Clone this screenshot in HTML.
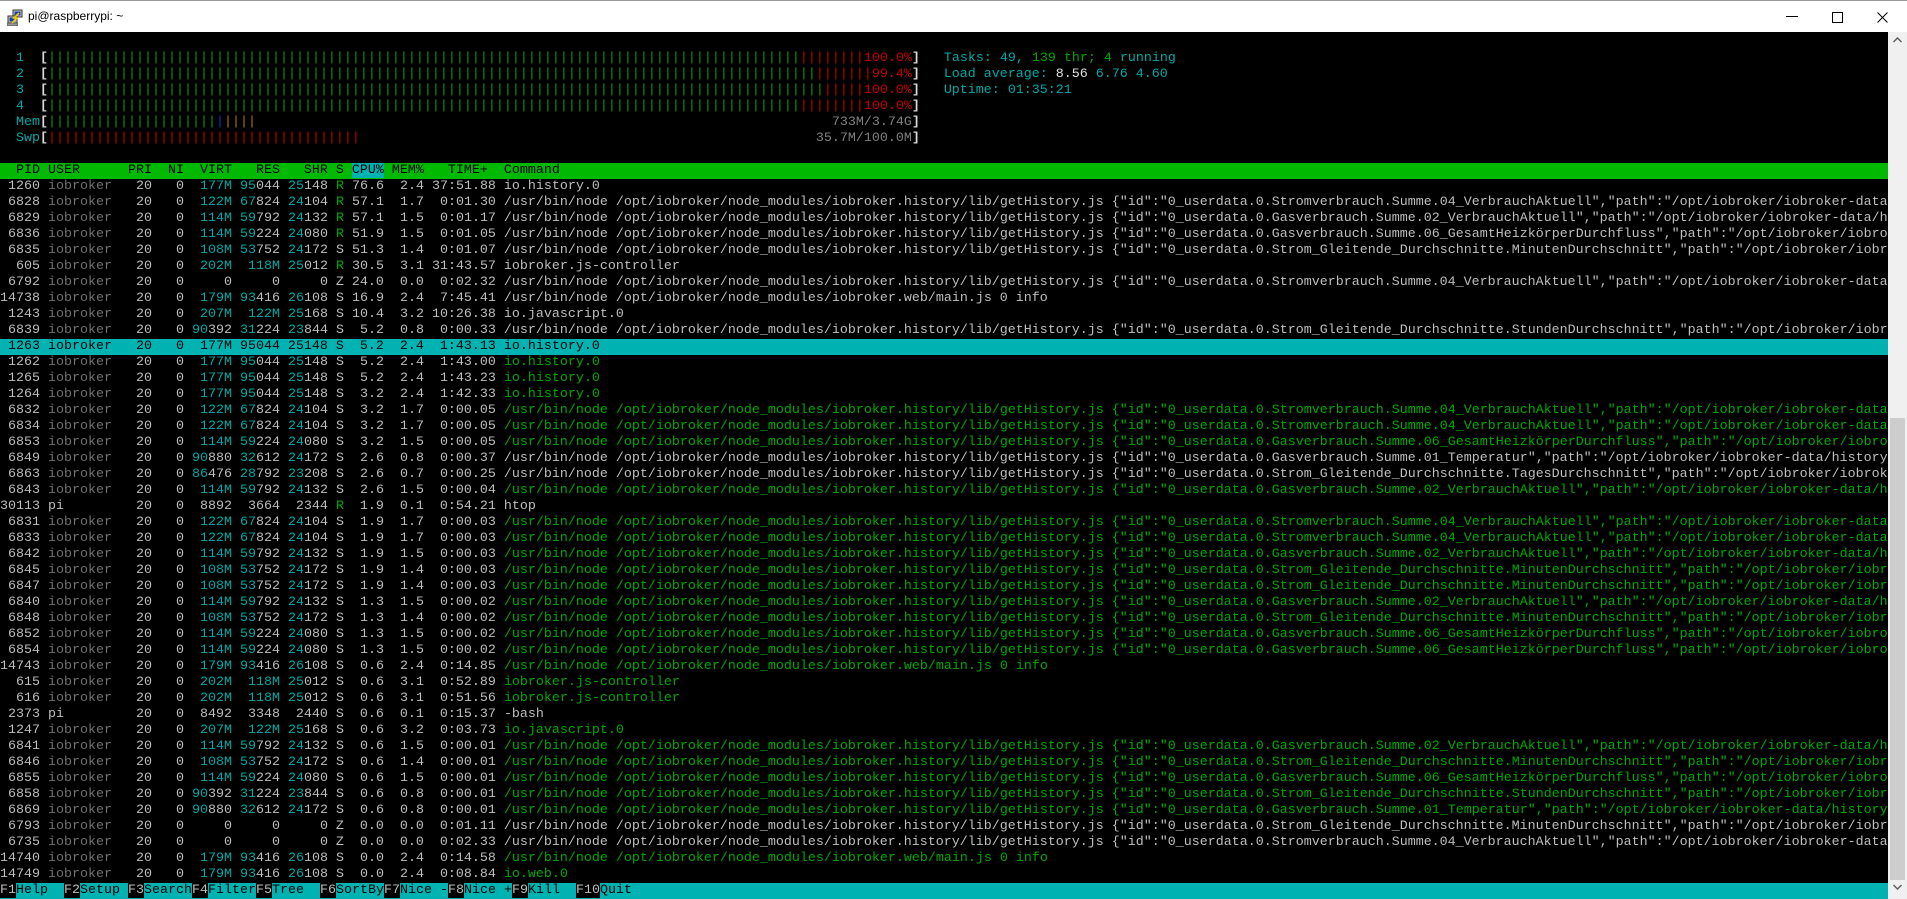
<!DOCTYPE html>
<html><head><meta charset="utf-8"><style>
*{margin:0;padding:0}
html,body{width:1907px;height:899px;overflow:hidden;background:#fff}
#tb{position:absolute;left:0;top:0;width:1907px;height:32px;background:#fff;border-top:1px solid #9a9a9a;box-sizing:border-box}
#tb .t{position:absolute;left:28px;top:8px;font:12px "Liberation Sans",sans-serif;color:#000}
#term{position:absolute;left:0;top:32px;width:1888px;height:867px;background:#000;overflow:hidden;padding-top:3px;box-sizing:border-box}
#term div{height:16px;line-height:16px;white-space:pre;font-family:"Liberation Mono",monospace;font-size:13.333px;color:#bdbdbd;overflow:hidden;width:1888px}
d{color:#6f6f6f}c{color:#00a8a8}g{color:#00a800}r{color:#c40000}k{color:#0a9a00}b{color:#d8d8d8;font-weight:bold}
m{color:#1a2fd0}o{color:#b07a00}y{color:#808080}e{color:#e0e0e0}
.hd{background:#00b900;color:#000!important}
.hd h{background:#00b3b3;font-style:normal}
.sel{background:#00b3b3;color:#000!important}
.fk{background:#00b3b3;color:#000!important}
.fk f{background:#000;color:#bdbdbd}
#sb{position:absolute;left:1888px;top:32px;width:19px;height:867px;background:#f0f0f0}
#th{position:absolute;left:2px;top:386px;width:15px;height:462px;background:#cdcdcd}
</style></head><body>
<div id="tb">
<svg style="position:absolute;left:7px;top:8px" width="17" height="17" viewBox="0 0 17 17"><rect x="6" y="1" width="9" height="7" fill="#c8c8c8" stroke="#333"/><rect x="7.5" y="2.5" width="6" height="4" fill="#1c3fae"/><rect x="1" y="7" width="9" height="7" fill="#c8c8c8" stroke="#333"/><rect x="2.5" y="8.5" width="6" height="4" fill="#1c3fae"/><rect x="0.5" y="14" width="10" height="2.5" fill="#999" stroke="#333" stroke-width="0.6"/><path d="M12 4 L7 9 L10 9 L5 14" stroke="#f2d000" stroke-width="1.6" fill="none"/></svg>
<span class="t">pi@raspberrypi: ~</span>
<svg style="position:absolute;left:1786px;top:15px" width="12" height="2"><rect width="12" height="1" fill="#000"/></svg>
<svg style="position:absolute;left:1832px;top:11px" width="11" height="11"><rect x="0.5" y="0.5" width="10" height="10" fill="none" stroke="#000"/></svg>
<svg style="position:absolute;left:1877px;top:11px" width="11" height="11"><path d="M0.5 0.5L10.5 10.5M10.5 0.5L0.5 10.5" stroke="#000"/></svg>
</div>
<div id="term">
<div> </div>
<div>  <c>1</c>  <b>[</b><k>||||||||||||||||||||||||||||||||||||||||||||||||||||||||||||||||||||||||||||||||||||||||||||||</k><r>||||||||100.0%</r><b>]</b>   <c>Tasks: </c><c>49</c><c>, </c><g>139</g><g> thr; </g><g>4</g><c> running</c></div>
<div>  <c>2</c>  <b>[</b><k>||||||||||||||||||||||||||||||||||||||||||||||||||||||||||||||||||||||||||||||||||||||||||||||||</k><r>|||||||99.4%</r><b>]</b>   <c>Load average: </c><e>8.56 </e><c>6.76 </c><c>4.60</c></div>
<div>  <c>3</c>  <b>[</b><k>|||||||||||||||||||||||||||||||||||||||||||||||||||||||||||||||||||||||||||||||||||||||||||||||||</k><r>|||||100.0%</r><b>]</b>   <c>Uptime: </c><c>01:35:21</c></div>
<div>  <c>4</c>  <b>[</b><k>||||||||||||||||||||||||||||||||||||||||||||||||||||||||||||||||||||||||||||||||||||||||||||||</k><r>||||||||100.0%</r><b>]</b></div>
<div>  <c>Mem</c><b>[</b><k>|||||||||||||||||||||</k><m>|</m><o>||||</o>                                                                        <y>733M/3.74G</y><b>]</b></div>
<div>  <c>Swp</c><b>[</b><r>|||||||||||||||||||||||||||||||||||||||</r>                                                         <y>35.7M/100.0M</y><b>]</b></div>
<div> </div>
<div class="hd">  PID USER      PRI  NI  VIRT   RES   SHR S <h>CPU%</h> MEM%   TIME+  Command                                                                                                                                                                                    </div>
<div> 1260 <d>iobroker </d>  20   0  <c>177M</c> <c>95</c>044 <c>25</c>148 <g>R</g> 76.6  2.4 37:51.88 io.history.0</div>
<div> 6828 <d>iobroker </d>  20   0  <c>122M</c> <c>67</c>824 <c>24</c>104 <g>R</g> 57.1  1.7  0:01.30 /usr/bin/node /opt/iobroker/node_modules/iobroker.history/lib/getHistory.js {"id":"0_userdata.0.Stromverbrauch.Summe.04_VerbrauchAktuell","path":"/opt/iobroker/iobroker-data/history/"}</div>
<div> 6829 <d>iobroker </d>  20   0  <c>114M</c> <c>59</c>792 <c>24</c>132 <g>R</g> 57.1  1.5  0:01.17 /usr/bin/node /opt/iobroker/node_modules/iobroker.history/lib/getHistory.js {"id":"0_userdata.0.Gasverbrauch.Summe.02_VerbrauchAktuell","path":"/opt/iobroker/iobroker-data/history/"}</div>
<div> 6836 <d>iobroker </d>  20   0  <c>114M</c> <c>59</c>224 <c>24</c>080 <g>R</g> 51.9  1.5  0:01.05 /usr/bin/node /opt/iobroker/node_modules/iobroker.history/lib/getHistory.js {"id":"0_userdata.0.Gasverbrauch.Summe.06_GesamtHeizkörperDurchfluss","path":"/opt/iobroker/iobroker-data/"}</div>
<div> 6835 <d>iobroker </d>  20   0  <c>108M</c> <c>53</c>752 <c>24</c>172 S 51.3  1.4  0:01.07 /usr/bin/node /opt/iobroker/node_modules/iobroker.history/lib/getHistory.js {"id":"0_userdata.0.Strom_Gleitende_Durchschnitte.MinutenDurchschnitt","path":"/opt/iobroker/iobroker-data/"}</div>
<div>  605 <d>iobroker </d>  20   0  <c>202M</c>  <c>118M</c> <c>25</c>012 <g>R</g> 30.5  3.1 31:43.57 iobroker.js-controller</div>
<div> 6792 <d>iobroker </d>  20   0     0     0     0 Z 24.0  0.0  0:02.32 /usr/bin/node /opt/iobroker/node_modules/iobroker.history/lib/getHistory.js {"id":"0_userdata.0.Stromverbrauch.Summe.04_VerbrauchAktuell","path":"/opt/iobroker/iobroker-data/history/"}</div>
<div>14738 <d>iobroker </d>  20   0  <c>179M</c> <c>93</c>416 <c>26</c>108 S 16.9  2.4  7:45.41 /usr/bin/node /opt/iobroker/node_modules/iobroker.web/main.js 0 info</div>
<div> 1243 <d>iobroker </d>  20   0  <c>207M</c>  <c>122M</c> <c>25</c>168 S 10.4  3.2 10:26.38 io.javascript.0</div>
<div> 6839 <d>iobroker </d>  20   0 <c>90</c>392 <c>31</c>224 <c>23</c>844 S  5.2  0.8  0:00.33 /usr/bin/node /opt/iobroker/node_modules/iobroker.history/lib/getHistory.js {"id":"0_userdata.0.Strom_Gleitende_Durchschnitte.StundenDurchschnitt","path":"/opt/iobroker/iobroker-data/"}</div>
<div class="sel"> 1263 iobroker   20   0  177M 95044 25148 S  5.2  2.4  1:43.13 io.history.0                                                                                                                                                                                         </div>
<div> 1262 <d>iobroker </d>  20   0  <c>177M</c> <c>95</c>044 <c>25</c>148 S  5.2  2.4  1:43.00 <g>io.history.0</g></div>
<div> 1265 <d>iobroker </d>  20   0  <c>177M</c> <c>95</c>044 <c>25</c>148 S  5.2  2.4  1:43.23 <g>io.history.0</g></div>
<div> 1264 <d>iobroker </d>  20   0  <c>177M</c> <c>95</c>044 <c>25</c>148 S  3.2  2.4  1:42.33 <g>io.history.0</g></div>
<div> 6832 <d>iobroker </d>  20   0  <c>122M</c> <c>67</c>824 <c>24</c>104 S  3.2  1.7  0:00.05 <g>/usr/bin/node /opt/iobroker/node_modules/iobroker.history/lib/getHistory.js {"id":"0_userdata.0.Stromverbrauch.Summe.04_VerbrauchAktuell","path":"/opt/iobroker/iobroker-data/history/"}</g></div>
<div> 6834 <d>iobroker </d>  20   0  <c>122M</c> <c>67</c>824 <c>24</c>104 S  3.2  1.7  0:00.05 <g>/usr/bin/node /opt/iobroker/node_modules/iobroker.history/lib/getHistory.js {"id":"0_userdata.0.Stromverbrauch.Summe.04_VerbrauchAktuell","path":"/opt/iobroker/iobroker-data/history/"}</g></div>
<div> 6853 <d>iobroker </d>  20   0  <c>114M</c> <c>59</c>224 <c>24</c>080 S  3.2  1.5  0:00.05 <g>/usr/bin/node /opt/iobroker/node_modules/iobroker.history/lib/getHistory.js {"id":"0_userdata.0.Gasverbrauch.Summe.06_GesamtHeizkörperDurchfluss","path":"/opt/iobroker/iobroker-data/"}</g></div>
<div> 6849 <d>iobroker </d>  20   0 <c>90</c>880 <c>32</c>612 <c>24</c>172 S  2.6  0.8  0:00.37 /usr/bin/node /opt/iobroker/node_modules/iobroker.history/lib/getHistory.js {"id":"0_userdata.0.Gasverbrauch.Summe.01_Temperatur","path":"/opt/iobroker/iobroker-data/history/abc"}</div>
<div> 6863 <d>iobroker </d>  20   0 <c>86</c>476 <c>28</c>792 <c>23</c>208 S  2.6  0.7  0:00.25 /usr/bin/node /opt/iobroker/node_modules/iobroker.history/lib/getHistory.js {"id":"0_userdata.0.Strom_Gleitende_Durchschnitte.TagesDurchschnitt","path":"/opt/iobroker/iobroker-data/"}</div>
<div> 6843 <d>iobroker </d>  20   0  <c>114M</c> <c>59</c>792 <c>24</c>132 S  2.6  1.5  0:00.04 <g>/usr/bin/node /opt/iobroker/node_modules/iobroker.history/lib/getHistory.js {"id":"0_userdata.0.Gasverbrauch.Summe.02_VerbrauchAktuell","path":"/opt/iobroker/iobroker-data/history/"}</g></div>
<div>30113 pi         20   0  8892  3664  2344 <g>R</g>  1.9  0.1  0:54.21 htop</div>
<div> 6831 <d>iobroker </d>  20   0  <c>122M</c> <c>67</c>824 <c>24</c>104 S  1.9  1.7  0:00.03 <g>/usr/bin/node /opt/iobroker/node_modules/iobroker.history/lib/getHistory.js {"id":"0_userdata.0.Stromverbrauch.Summe.04_VerbrauchAktuell","path":"/opt/iobroker/iobroker-data/history/"}</g></div>
<div> 6833 <d>iobroker </d>  20   0  <c>122M</c> <c>67</c>824 <c>24</c>104 S  1.9  1.7  0:00.03 <g>/usr/bin/node /opt/iobroker/node_modules/iobroker.history/lib/getHistory.js {"id":"0_userdata.0.Stromverbrauch.Summe.04_VerbrauchAktuell","path":"/opt/iobroker/iobroker-data/history/"}</g></div>
<div> 6842 <d>iobroker </d>  20   0  <c>114M</c> <c>59</c>792 <c>24</c>132 S  1.9  1.5  0:00.03 <g>/usr/bin/node /opt/iobroker/node_modules/iobroker.history/lib/getHistory.js {"id":"0_userdata.0.Gasverbrauch.Summe.02_VerbrauchAktuell","path":"/opt/iobroker/iobroker-data/history/"}</g></div>
<div> 6845 <d>iobroker </d>  20   0  <c>108M</c> <c>53</c>752 <c>24</c>172 S  1.9  1.4  0:00.03 <g>/usr/bin/node /opt/iobroker/node_modules/iobroker.history/lib/getHistory.js {"id":"0_userdata.0.Strom_Gleitende_Durchschnitte.MinutenDurchschnitt","path":"/opt/iobroker/iobroker-data/"}</g></div>
<div> 6847 <d>iobroker </d>  20   0  <c>108M</c> <c>53</c>752 <c>24</c>172 S  1.9  1.4  0:00.03 <g>/usr/bin/node /opt/iobroker/node_modules/iobroker.history/lib/getHistory.js {"id":"0_userdata.0.Strom_Gleitende_Durchschnitte.MinutenDurchschnitt","path":"/opt/iobroker/iobroker-data/"}</g></div>
<div> 6840 <d>iobroker </d>  20   0  <c>114M</c> <c>59</c>792 <c>24</c>132 S  1.3  1.5  0:00.02 <g>/usr/bin/node /opt/iobroker/node_modules/iobroker.history/lib/getHistory.js {"id":"0_userdata.0.Gasverbrauch.Summe.02_VerbrauchAktuell","path":"/opt/iobroker/iobroker-data/history/"}</g></div>
<div> 6848 <d>iobroker </d>  20   0  <c>108M</c> <c>53</c>752 <c>24</c>172 S  1.3  1.4  0:00.02 <g>/usr/bin/node /opt/iobroker/node_modules/iobroker.history/lib/getHistory.js {"id":"0_userdata.0.Strom_Gleitende_Durchschnitte.MinutenDurchschnitt","path":"/opt/iobroker/iobroker-data/"}</g></div>
<div> 6852 <d>iobroker </d>  20   0  <c>114M</c> <c>59</c>224 <c>24</c>080 S  1.3  1.5  0:00.02 <g>/usr/bin/node /opt/iobroker/node_modules/iobroker.history/lib/getHistory.js {"id":"0_userdata.0.Gasverbrauch.Summe.06_GesamtHeizkörperDurchfluss","path":"/opt/iobroker/iobroker-data/"}</g></div>
<div> 6854 <d>iobroker </d>  20   0  <c>114M</c> <c>59</c>224 <c>24</c>080 S  1.3  1.5  0:00.02 <g>/usr/bin/node /opt/iobroker/node_modules/iobroker.history/lib/getHistory.js {"id":"0_userdata.0.Gasverbrauch.Summe.06_GesamtHeizkörperDurchfluss","path":"/opt/iobroker/iobroker-data/"}</g></div>
<div>14743 <d>iobroker </d>  20   0  <c>179M</c> <c>93</c>416 <c>26</c>108 S  0.6  2.4  0:14.85 <g>/usr/bin/node /opt/iobroker/node_modules/iobroker.web/main.js 0 info</g></div>
<div>  615 <d>iobroker </d>  20   0  <c>202M</c>  <c>118M</c> <c>25</c>012 S  0.6  3.1  0:52.89 <g>iobroker.js-controller</g></div>
<div>  616 <d>iobroker </d>  20   0  <c>202M</c>  <c>118M</c> <c>25</c>012 S  0.6  3.1  0:51.56 <g>iobroker.js-controller</g></div>
<div> 2373 pi         20   0  8492  3348  2440 S  0.6  0.1  0:15.37 -bash</div>
<div> 1247 <d>iobroker </d>  20   0  <c>207M</c>  <c>122M</c> <c>25</c>168 S  0.6  3.2  0:03.73 <g>io.javascript.0</g></div>
<div> 6841 <d>iobroker </d>  20   0  <c>114M</c> <c>59</c>792 <c>24</c>132 S  0.6  1.5  0:00.01 <g>/usr/bin/node /opt/iobroker/node_modules/iobroker.history/lib/getHistory.js {"id":"0_userdata.0.Gasverbrauch.Summe.02_VerbrauchAktuell","path":"/opt/iobroker/iobroker-data/history/"}</g></div>
<div> 6846 <d>iobroker </d>  20   0  <c>108M</c> <c>53</c>752 <c>24</c>172 S  0.6  1.4  0:00.01 <g>/usr/bin/node /opt/iobroker/node_modules/iobroker.history/lib/getHistory.js {"id":"0_userdata.0.Strom_Gleitende_Durchschnitte.MinutenDurchschnitt","path":"/opt/iobroker/iobroker-data/"}</g></div>
<div> 6855 <d>iobroker </d>  20   0  <c>114M</c> <c>59</c>224 <c>24</c>080 S  0.6  1.5  0:00.01 <g>/usr/bin/node /opt/iobroker/node_modules/iobroker.history/lib/getHistory.js {"id":"0_userdata.0.Gasverbrauch.Summe.06_GesamtHeizkörperDurchfluss","path":"/opt/iobroker/iobroker-data/"}</g></div>
<div> 6858 <d>iobroker </d>  20   0 <c>90</c>392 <c>31</c>224 <c>23</c>844 S  0.6  0.8  0:00.01 <g>/usr/bin/node /opt/iobroker/node_modules/iobroker.history/lib/getHistory.js {"id":"0_userdata.0.Strom_Gleitende_Durchschnitte.StundenDurchschnitt","path":"/opt/iobroker/iobroker-data/"}</g></div>
<div> 6869 <d>iobroker </d>  20   0 <c>90</c>880 <c>32</c>612 <c>24</c>172 S  0.6  0.8  0:00.01 <g>/usr/bin/node /opt/iobroker/node_modules/iobroker.history/lib/getHistory.js {"id":"0_userdata.0.Gasverbrauch.Summe.01_Temperatur","path":"/opt/iobroker/iobroker-data/history/abc"}</g></div>
<div> 6793 <d>iobroker </d>  20   0     0     0     0 Z  0.0  0.0  0:01.11 /usr/bin/node /opt/iobroker/node_modules/iobroker.history/lib/getHistory.js {"id":"0_userdata.0.Strom_Gleitende_Durchschnitte.MinutenDurchschnitt","path":"/opt/iobroker/iobroker-data/"}</div>
<div> 6735 <d>iobroker </d>  20   0     0     0     0 Z  0.0  0.0  0:02.33 /usr/bin/node /opt/iobroker/node_modules/iobroker.history/lib/getHistory.js {"id":"0_userdata.0.Stromverbrauch.Summe.04_VerbrauchAktuell","path":"/opt/iobroker/iobroker-data/history/"}</div>
<div>14740 <d>iobroker </d>  20   0  <c>179M</c> <c>93</c>416 <c>26</c>108 S  0.0  2.4  0:14.58 <g>/usr/bin/node /opt/iobroker/node_modules/iobroker.web/main.js 0 info</g></div>
<div>14749 <d>iobroker </d>  20   0  <c>179M</c> <c>93</c>416 <c>26</c>108 S  0.0  2.4  0:08.84 <g>io.web.0</g></div>
<div class="fk"><f>F1</f>Help  <f>F2</f>Setup <f>F3</f>Search<f>F4</f>Filter<f>F5</f>Tree  <f>F6</f>SortBy<f>F7</f>Nice -<f>F8</f>Nice +<f>F9</f>Kill  <f>F10</f>Quit  </div>
</div>
<div id="sb">
<svg style="position:absolute;left:5px;top:5px" width="9" height="6"><path d="M0.5 5L4.5 1L8.5 5" stroke="#606060" stroke-width="1.5" fill="none"/></svg>
<div id="th"></div>
<svg style="position:absolute;left:5px;top:852px" width="9" height="6"><path d="M0.5 1L4.5 5L8.5 1" stroke="#606060" stroke-width="1.5" fill="none"/></svg>
</div>
</body></html>
